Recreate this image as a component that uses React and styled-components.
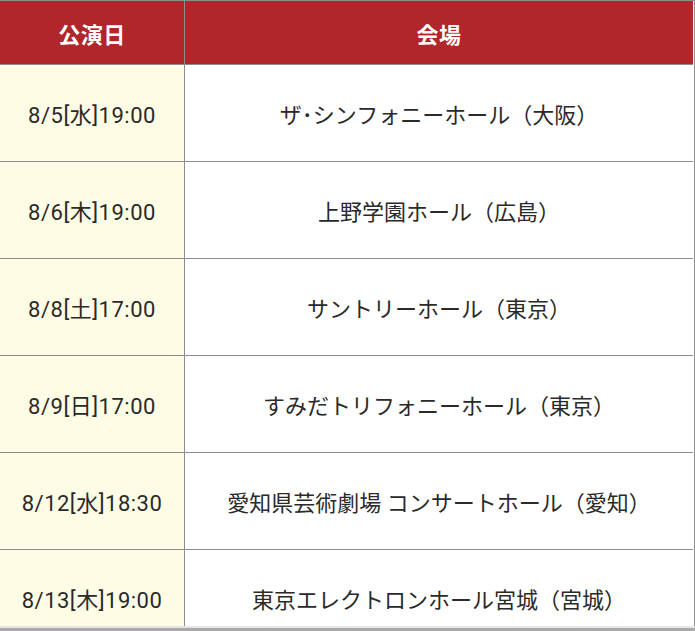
import styled, { createGlobalStyle } from "styled-components";

const GlobalStyle = createGlobalStyle`
  html, body {
    margin: 0;
    padding: 0;
    background: #fff;
    overflow: hidden;
  }
  body {
    font-family: Roboto, "Noto Sans CJK JP", sans-serif;
  }
`;

const Frame = styled.div`
  height: 626px;
  overflow: hidden;
  border-bottom: 2px solid #e6e6e6;
`;

const Shelf = styled.div`
  height: 3px;
  background: #a9a9a9;
`;

const Schedule = styled.div`
  display: grid;
  grid-template-columns: 185px 508px;
  width: 694px;
  border-top: 1px solid #8e8e8e;
  border-right: 1px solid #8e8e8e;
`;

const HeadCell = styled.div`
  box-sizing: border-box;
  height: 64px;
  display: flex;
  align-items: center;
  justify-content: center;
  background: #b1262a;
  color: #fff;
  font-weight: 700;
  font-size: 22px;
  letter-spacing: 0.5px;
  border-bottom: 1px solid #8e8e8e;
  border-right: ${(p) => (p.$first ? "1px solid #8e8e8e" : "none")};
`;

const Cell = styled.div`
  box-sizing: border-box;
  height: 97px;
  display: flex;
  align-items: center;
  justify-content: center;
  font-size: 22px;
  letter-spacing: ${(p) => (p.$date ? "0.5px" : "0")};
  color: #2a2a2a;
  background: ${(p) => (p.$date ? "#fffce6" : "#fff")};
  border-bottom: 1px solid #8e8e8e;
  border-right: ${(p) => (p.$date ? "1px solid #8e8e8e" : "none")};
  white-space: nowrap;
`;

const shows = [
  { date: "8/5[水]19:00", hall: "ザ･シンフォニーホール（大阪）" },
  { date: "8/6[木]19:00", hall: "上野学園ホール（広島）" },
  { date: "8/8[土]17:00", hall: "サントリーホール（東京）" },
  { date: "8/9[日]17:00", hall: "すみだトリフォニーホール（東京）" },
  { date: "8/12[水]18:30", hall: "愛知県芸術劇場 コンサートホール（愛知）" },
  { date: "8/13[木]19:00", hall: "東京エレクトロンホール宮城（宮城）" },
];

export default function App() {
  return (
    <>
      <GlobalStyle />
      <Frame>
        <Schedule>
          <HeadCell $first>公演日</HeadCell>
          <HeadCell>会場</HeadCell>
          {shows.map((s) => (
            <>
              <Cell key={s.date} $date>
                {s.date}
              </Cell>
              <Cell key={s.hall}>{s.hall}</Cell>
            </>
          ))}
        </Schedule>
      </Frame>
      <Shelf />
    </>
  );
}
